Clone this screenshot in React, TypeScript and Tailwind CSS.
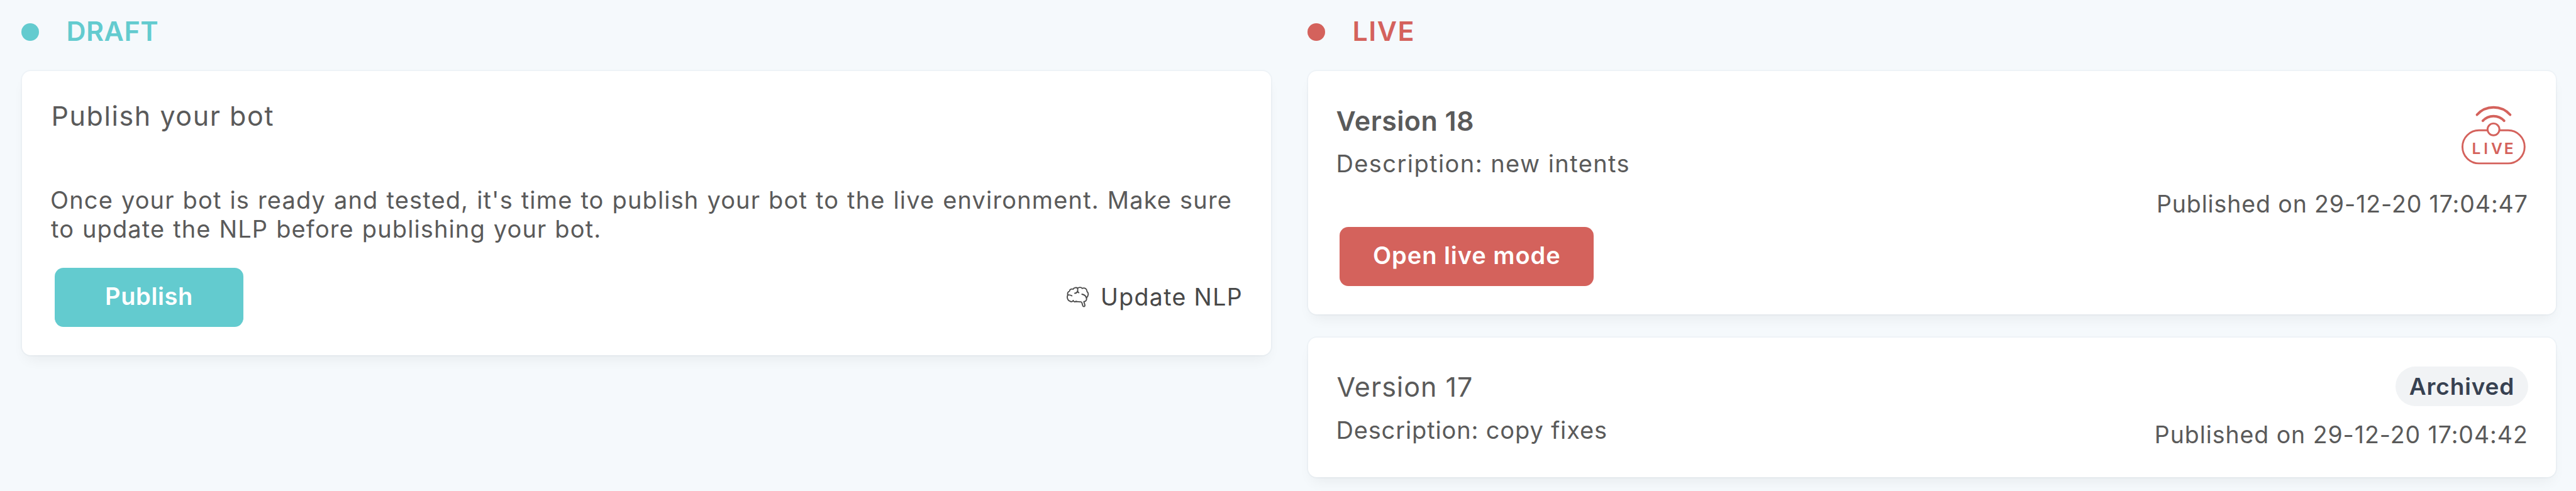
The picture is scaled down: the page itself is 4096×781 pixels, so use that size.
import React from "react";

function LiveIcon() {
  return (
    <svg viewBox="234 93 336 306" className="mr-[3.5px] h-[94.4px] w-[103.6px]" fill="none" stroke="#d4625c">
      <rect x="242" y="220.5" width="320.5" height="170.5" rx="85" strokeWidth="9.5" />
      <circle cx="402" cy="215.5" r="30.5" strokeWidth="9.5" fill="#fff" />
      <path d="M317 140A115 115 0 0 1 488 140" strokeWidth="13" strokeLinecap="round" />
      <path d="M347 171A75 75 0 0 1 457 171" strokeWidth="13" strokeLinecap="round" />
      <text x="291 352 390 457" y="343.5" fontFamily="Inter, sans-serif" fontSize="80" fontWeight="600" fill="#d4625c" stroke="none">LIVE</text>
    </svg>
  );
}

function BrainIcon() {
  return (
    <svg viewBox="25 26 116 108" className="h-[33.3px] w-[35.8px]" fill="none" stroke="#484848" strokeWidth="6" strokeLinecap="round" strokeLinejoin="round">
      <path d="M82 34C76 29 62 30 58 39C50 36 40 39 40 49C32 51 28 60 31 69C25 80 30 99 43 101C49 105 56 104 59 97C61 105 69 106 73 101C79 105 86 102 92 104C97 105 102 103 103 107L108 123C110 131 120 130 119 122C119 115 114 109 114 103C124 103 130 94 127 84C138 74 140 58 130 51C131 38 117 29 106 35C100 28 88 28 82 34Z" />
      <path d="M31 69C38 68 46 69 52 73" />
      <path d="M67 60C77 60 84 52 82 36M82 48C82 53 84 56 88 57" />
      <path d="M104 65C115 67 124 73 127 84" />
    </svg>
  );
}

const card = "flex rounded-[14px] bg-white shadow-[0_0_0_2px_rgba(30,60,90,0.03),0_12px_22px_-6px_rgba(0,0,0,0.06)]";

export default function App() {
  return (
    <div className="flex h-[781px] w-[4096px] gap-[59.4px] overflow-hidden bg-[#f5f9fc] pl-[35px] text-[38px] leading-[46.3px] text-[#5a5a5a] font-['Inter','Liberation_Sans',sans-serif]">
      <section className="flex w-[1986px] flex-col">
        <header className="-ml-[1.5px] flex h-[113px] gap-[44px] pt-[19.2px] text-[43px] leading-[60px] font-[560] text-[#63cbcf]">
          <span className="mt-[17.8px] size-[28px] rounded-full bg-[#63cbcf]" />
          <h2 className="tracking-[0.5px]">DRAFT</h2>
        </header>
        <div className={card + " h-[451.5px] flex-col pt-[41.4px] pr-[45px] pl-[45px]"}>
          <h3 className="pl-[1.5px] text-[43px] leading-[60px] tracking-[1.58px]">Publish your bot</h3>
          <p className="mt-[80.2px] whitespace-nowrap">
            <span className="block tracking-[1.15px] [word-spacing:1.1px]">Once your bot is ready and tested, it's time to publish your bot to the live environment. Make sure</span>
            <span className="block pl-[1px] tracking-[1.12px] [word-spacing:1.1px]">to update the NLP before publishing your bot.</span>
          </p>
          <div className="mt-[38.4px] flex items-center justify-between">
            <button className="ml-[7px] h-[94.4px] w-[300px] rounded-[14px] bg-[#63cbcf] pb-[3px] font-semibold tracking-[0.64px] text-white">Publish</button>
            <span className="flex items-center gap-[18px] text-[37.5px] text-[#484848]">
              <BrainIcon />
              <span className="pt-[1px] tracking-[1.35px]">Update NLP</span>
            </span>
          </div>
        </div>
      </section>

      <section className="flex w-[1984px] flex-col">
        <header className="-ml-[1.9px] flex h-[113px] gap-[44px] pt-[19.2px] text-[43px] leading-[60px] font-[560] text-[#d4625c]">
          <span className="mt-[17.8px] size-[28px] rounded-full bg-[#d4625c]" />
          <h2 className="tracking-[1.5px]">LIVE</h2>
        </header>
        <div className={card + " h-[386.6px] justify-between pr-[44.6px] pl-[45px]"}>
          <div className="flex flex-col items-start pt-[49.4px]">
            <h3 className="-ml-[0.8px] text-[43px] leading-[60px] font-semibold tracking-[0.42px]">Version 18</h3>
            <p className="-ml-[1px] mt-[14.6px] tracking-[1.43px]">Description: new intents</p>
            <button className="mt-[77.3px] ml-[5px] h-[94.4px] w-[403.7px] rounded-[14px] bg-[#d4625c] pb-[3px] font-semibold tracking-[0.96px] text-white">Open live mode</button>
          </div>
          <div className="flex flex-col items-end pt-[54.5px] text-[37.5px]">
            <LiveIcon />
            <p className="mt-[40.6px] tracking-[0.88px]">Published on 29-12-20 17:04:47</p>
          </div>
        </div>
        <div className={card + " mt-[37.1px] h-[222.2px] justify-between pr-[44.6px] pl-[45px]"}>
          <div className="pt-[48.8px]">
            <h3 className="text-[43px] leading-[60px] tracking-[1px]">Version 17</h3>
            <p className="-ml-[1px] mt-[15.5px] tracking-[0.86px]">Description: copy fixes</p>
          </div>
          <div className="flex flex-col items-end pt-[46px] text-[37.5px]">
            <span className="flex h-[63.2px] w-[210.6px] items-center justify-center rounded-full bg-[#f1f3f5] pt-[1.5px] text-[37px] font-semibold tracking-[0.84px] text-[#374151]">Archived</span>
            <p className="mt-[23px] tracking-[0.93px]">Published on 29-12-20 17:04:42</p>
          </div>
        </div>
      </section>
    </div>
  );
}
